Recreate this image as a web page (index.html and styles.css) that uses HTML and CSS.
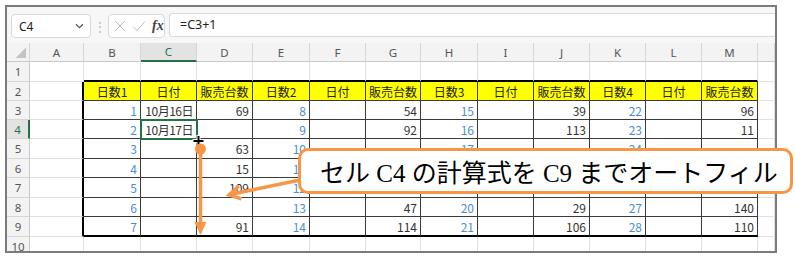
FILE: index.html
```html
<!DOCTYPE html>
<html lang="ja">
<head>
  <meta charset="UTF-8">
  <title>オートフィル</title>
  <link rel="stylesheet" href="styles.css">
</head>
<body>
  <div id="page">
    <div id="window">
      <div class="toolbar">
        <div class="namebox">
          <span>C4</span>
          <svg class="chev" width="9" height="6" viewBox="0 0 9 6"><path d="M1 1.2 4.5 4.6 8 1.2" fill="none" stroke="#555" stroke-width="1.2"/></svg>
        </div>
        <div class="grip">⋮</div>
        <div class="fxbox">
          <svg width="12" height="12" viewBox="0 0 12 12"><path d="M1 1 11 11M11 1 1 11" stroke="#bdbdbd" stroke-width="1"/></svg>
          <svg width="14" height="12" viewBox="0 0 14 12"><path d="M1 6.5 5 10.5 13 1.5" fill="none" stroke="#bdbdbd" stroke-width="1"/></svg>
          <span class="fx">fx</span>
        </div>
        <div class="formula">=C3+1</div>
      </div>

      <table class="sheet">
        <colgroup>
          <col style="width:23px"><col style="width:54px"><col style="width:57px"><col style="width:56px">
          <col style="width:56px"><col style="width:57px"><col style="width:56px"><col style="width:55px">
          <col style="width:57px"><col style="width:56px"><col style="width:56px"><col style="width:56px">
          <col style="width:56px"><col style="width:56px"><col style="width:17px">
        </colgroup>
        <tr class="colhead">
          <td class="corner"></td><td>A</td><td>B</td><td class="csel">C</td><td>D</td><td>E</td><td>F</td><td>G</td><td>H</td><td>I</td><td>J</td><td>K</td><td>L</td><td>M</td><td></td>
        </tr>
        <tr class="r1 h20">
          <td class="rh">1</td><td></td><td></td><td></td><td></td><td></td><td></td><td></td><td></td><td></td><td></td><td></td><td></td><td></td><td></td>
        </tr>
        <tr class="data hdr">
          <td class="rh">2</td><td></td><td>日数1</td><td>日付</td><td>販売台数</td><td>日数2</td><td>日付</td><td>販売台数</td><td>日数3</td><td>日付</td><td>販売台数</td><td>日数4</td><td>日付</td><td>販売台数</td><td></td>
        </tr>
        <tr class="data">
          <td class="rh">3</td><td></td><td>1</td><td class="date">10月16日</td><td>69</td><td>8</td><td></td><td>54</td><td>15</td><td></td><td>39</td><td>22</td><td></td><td>96</td><td></td>
        </tr>
        <tr class="data">
          <td class="rh rsel">4</td><td></td><td>2</td><td class="date sel">10月17日</td><td></td><td>9</td><td></td><td>92</td><td>16</td><td></td><td>113</td><td>23</td><td></td><td>11</td><td></td>
        </tr>
        <tr class="data h20">
          <td class="rh">5</td><td></td><td>3</td><td></td><td>63</td><td>10</td><td></td><td></td><td>17</td><td></td><td></td><td>24</td><td></td><td></td><td></td>
        </tr>
        <tr class="data">
          <td class="rh">6</td><td></td><td>4</td><td></td><td>15</td><td>11</td><td></td><td></td><td></td><td></td><td></td><td></td><td></td><td></td><td></td>
        </tr>
        <tr class="data h20">
          <td class="rh">7</td><td></td><td>5</td><td></td><td>109</td><td>12</td><td></td><td></td><td></td><td></td><td></td><td></td><td></td><td></td><td></td>
        </tr>
        <tr class="data">
          <td class="rh">8</td><td></td><td>6</td><td></td><td></td><td>13</td><td></td><td>47</td><td>20</td><td></td><td>29</td><td>27</td><td></td><td>140</td><td></td>
        </tr>
        <tr class="data last h20">
          <td class="rh">9</td><td></td><td>7</td><td></td><td>91</td><td>14</td><td></td><td>114</td><td>21</td><td></td><td>106</td><td>28</td><td></td><td>110</td><td></td>
        </tr>
        <tr>
          <td class="rh">10</td><td></td><td></td><td></td><td></td><td></td><td></td><td></td><td></td><td></td><td></td><td></td><td></td><td></td><td></td>
        </tr>
      </table>
    </div>

    <!-- callout over the sheet -->
    <div class="callout">セル C4 の計算式を C9 までオートフィル</div>

    <svg class="marks" width="795" height="259" viewBox="0 0 795 259">
      <!-- fill handle cursor -->
      <path d="M198.5 135v12M192.5 141h12" stroke="#fff" stroke-width="4"/>
      <path d="M198.5 136v10M193.5 141h10" stroke="#000" stroke-width="2"/>
      <!-- drag arrow -->
      <circle cx="200.5" cy="149" r="5.5" fill="#f79646"/>
      <path d="M200.5 149V224" stroke="#f79646" stroke-width="3.5"/>
      <path d="M194.5 222H206.5L200.5 235Z" fill="#f79646"/>
      <!-- pointer from callout -->
      <path d="M300 180L230 194.5M241.4 198.9L229 195L238.8 186" fill="none" stroke="#f79646" stroke-width="3.5" stroke-linejoin="miter"/>
    </svg>
  </div>
</body>
</html>
```

FILE: styles.css
```css
* {
  box-sizing: border-box;
}

html, body {
  margin: 0;
  background: #fff;
  font-family: "Noto Sans CJK JP", "Noto Sans", sans-serif;
}

#page {
  position: relative;
  width: 795px;
  height: 259px;
  padding: 5px 0 0 5px;
  overflow: hidden;
}

#window {
  width: 772px;
  height: 248px;
  border: 2px solid #7b7b7b;
  overflow: hidden;
}

.toolbar {
  display: flex;
  align-items: flex-start;
  height: 36px;
  padding: 6px 0 0 4px;
  background: #f7f7f7;
}

.namebox {
  display: flex;
  align-items: center;
  justify-content: space-between;
  width: 80px;
  height: 24px;
  margin-top: 1px;
  padding: 0 6px 0 7px;
  border: 1px solid #d9d9d9;
  border-radius: 4px;
  background: #fff;
  font-family: "Noto Sans", sans-serif;
  font-size: 12px;
  color: #222;
}

.grip {
  width: 17px;
  margin-top: 4px;
  text-align: center;
  font-size: 12px;
  color: #b5b5b5;
}

.fxbox {
  display: flex;
  align-items: center;
  gap: 6px;
  width: 57px;
  height: 24px;
  margin-top: 1px;
  padding-left: 5px;
  border: 1px solid #d9d9d9;
  border-radius: 4px;
  background: #fff;
}

.fx {
  font-family: "Liberation Serif", serif;
  font-style: italic;
  font-weight: bold;
  font-size: 14px;
  color: #444;
}

.formula {
  flex: 1;
  height: 24px;
  margin-left: 4px;
  padding: 2px 0 0 10px;
  border: 1px solid #d9d9d9;
  border-right: none;
  border-radius: 4px 0 0 4px;
  background: #fff;
  font-family: "Noto Sans", sans-serif;
  font-size: 12.5px;
  color: #222;
}

.sheet {
  border-collapse: separate;
  border-spacing: 0;
  table-layout: fixed;
  width: 768px;
  font-size: 12px;
  color: #333;
}

.sheet td {
  height: 19px;
  padding: 0 3px 0 0;
  border-right: 1px solid #e1e1e1;
  border-bottom: 1px solid #e1e1e1;
  line-height: 17px;
  white-space: nowrap;
  overflow: hidden;
}

.sheet tr.h20 td {
  height: 20px;
}

.colhead td {
  padding: 0;
  background: #f3f3f3;
  border-right-color: #d6d6d6;
  border-bottom-color: #c9c9c9;
  text-align: center;
  font-family: "Noto Sans", sans-serif;
  font-size: 11.5px;
  color: #555;
}

.corner {
  background: #f3f3f3 linear-gradient(to bottom right, transparent 50%, #c4c4c4 50%) no-repeat right 3px bottom 3px / 11px 11px !important;
}

.colhead .csel {
  background: #e3e3e3;
  border-bottom: 2px solid #217346;
  color: #217346;
}

.sheet td.rh {
  padding: 0;
  background: #f3f3f3;
  border-right-color: #c9c9c9;
  border-bottom-color: #d6d6d6;
  text-align: center;
  font-family: "Noto Sans", sans-serif;
  font-size: 11.5px;
  color: #555;
}

.sheet td.rsel {
  background: #e3e3e3;
  border-right: 2px solid #217346;
  color: #217346;
}

/* data block B2:M9 */
.data td {
  text-align: right;
}

.sheet td.date {
  letter-spacing: -0.5px;
}

.r1 td:nth-child(n+3):nth-child(-n+14) {
  border-bottom: 2px solid #000;
}

.data td:nth-child(2) {
  border-right: 2px solid #000;
}

.data td:nth-child(n+3):nth-child(-n+14) {
  border-right: 1px solid #3a3a3a;
  border-bottom: 1px solid #3a3a3a;
}

.data td:nth-child(5),
.data td:nth-child(8),
.data td:nth-child(11),
.data td:nth-child(14) {
  border-right: 2px solid #000;
}

.data.last td:nth-child(n+3):nth-child(-n+14) {
  border-bottom: 2px solid #000;
}

.data td:nth-child(3n) {
  color: #4a8fd6;
}

.hdr td:nth-child(n+3):nth-child(-n+14) {
  padding: 0;
  background: #ffff00;
  text-align: center;
  color: #222;
}

.sheet td.sel {
  outline: 2px solid #217346;
  outline-offset: -1px;
}

.callout {
  position: absolute;
  left: 298px;
  top: 148px;
  display: flex;
  align-items: center;
  width: 495px;
  height: 46px;
  padding-left: 19px;
  border: 3px solid #f79646;
  border-radius: 10px;
  background: #fff;
  font-family: "Liberation Serif", "Noto Sans CJK JP", serif;
  font-size: 25px;
  color: #000;
  white-space: nowrap;
}

.marks {
  position: absolute;
  left: 0;
  top: 0;
  pointer-events: none;
}
```
